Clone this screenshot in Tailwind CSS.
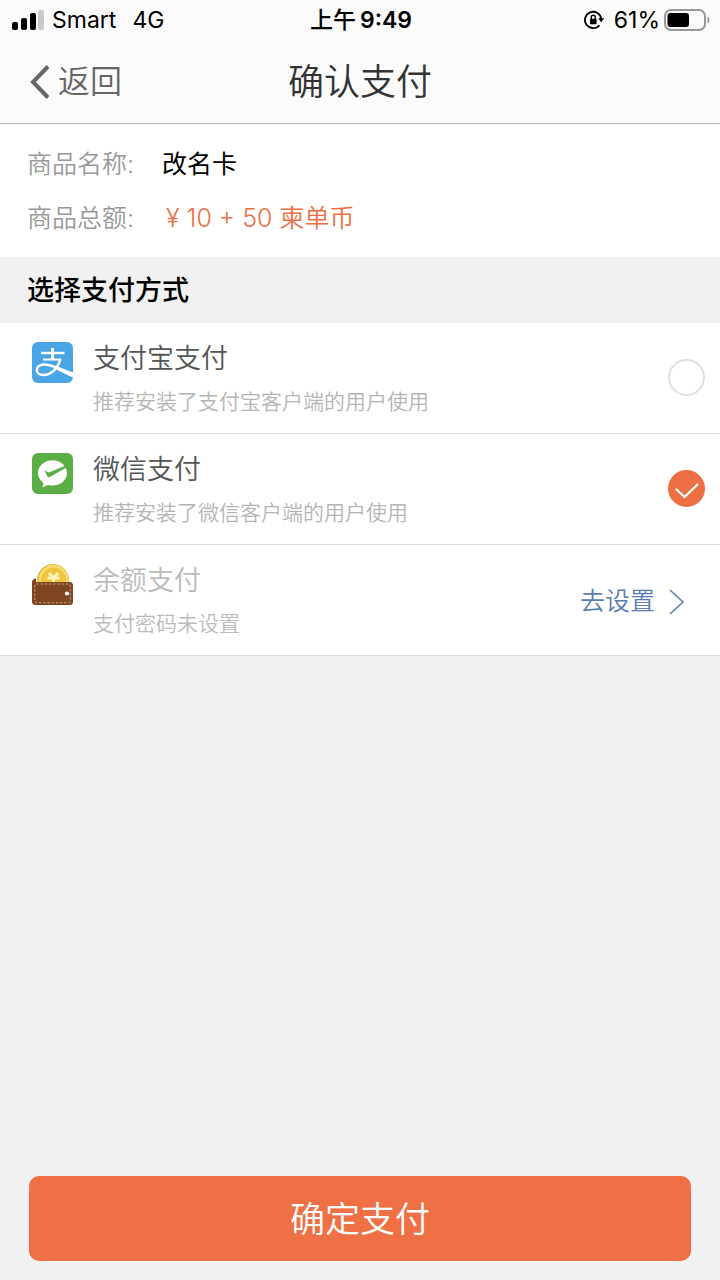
<!DOCTYPE html>
<html lang="zh-CN">
<head>
<meta charset="utf-8">
<meta name="viewport" content="width=device-width, initial-scale=1">
<title>确认支付</title>
<script src="https://cdn.jsdelivr.net/npm/@tailwindcss/browser@4"></script>
</head>
<body class="flex min-h-screen flex-col bg-[#f1f1f1] font-['Inter','Noto_Sans_CJK_SC',sans-serif] text-black">
  <header class="border-b border-[#b5b5b5] bg-[#fbfbfb]">
    <div class="grid h-10 grid-cols-[1fr_auto_1fr] items-center pr-[10px] pl-3 text-[23px] leading-10">
      <div class="flex items-center">
        <svg class="mr-2 h-5 w-8" viewBox="0 0 32 20" aria-hidden="true">
          <rect x="0" y="12" width="6" height="8" rx="2"/>
          <rect x="9" y="8" width="6" height="12" rx="2"/>
          <rect x="18" y="3" width="6" height="17" rx="2"/>
          <rect x="26" y="0" width="6" height="20" rx="2" fill="#c8c8c8"/>
        </svg>
        <span>Smart</span><span class="ml-4">4G</span>
      </div>
      <div class="flex items-center gap-1 font-medium"><span>上午</span><span class="font-semibold">9:49</span></div>
      <div class="flex items-center justify-end">
        <svg class="mr-[10px] h-5 w-5" viewBox="0 0 20 20" fill="none" stroke="#000" stroke-width="1.8" aria-hidden="true">
          <path d="M17.3 9A8.2 8.2 0 1 0 15.500 15.2"/>
          <path d="M14.2 8.2h6l-3 4z" fill="#000" stroke="none"/>
          <rect x="6" y="8.8" width="6.6" height="5.4" rx=".8" fill="#000" stroke="none"/>
          <path d="M7.3 9V7.2a2 2 0 0 1 4 0V9" stroke-width="1.4"/>
        </svg>
        <span>61%</span>
        <svg class="ml-1 h-[22px] w-[46px]" viewBox="0 0 46 22" fill="none" aria-hidden="true">
          <rect x="1" y="1" width="40" height="20" rx="6" stroke="#999" stroke-width="2"/>
          <rect x="3.5" y="4" width="21.5" height="14" rx="3" fill="#000"/>
          <path d="M43.5 7.5c2.5 1 2.5 6 0 7z" fill="#999"/>
        </svg>
      </div>
    </div>
    <div class="grid h-[83px] grid-cols-[1fr_auto_1fr] items-center px-[30px]">
      <button type="button" class="flex items-center gap-2 justify-self-start text-[32px] leading-10 font-[350] text-[#666]">
        <svg class="h-[34px] w-5" viewBox="0 0 20 34" fill="none" stroke="#666" stroke-width="4" aria-hidden="true"><path d="M18 1.5 3 17l15 15.500"/></svg>返回
      </button>
      <h1 class="text-[36px] leading-[48px] font-[350] text-[#333]">确认支付</h1>
    </div>
  </header>

  <main class="flex flex-1 flex-col font-[350]">
    <dl class="grid grid-cols-[auto_1fr] bg-white pt-[13px] pb-3 pl-[27px] text-[25px] leading-[54px]">
      <dt class="w-[135px] text-[#999]">商品名称:</dt><dd class="font-normal">改名卡</dd>
      <dt class="text-[#999]">商品总额:</dt><dd class="pl-1 text-[#ec7044]">¥ 10 + 50 柬单币</dd>
    </dl>
    <h2 class="pt-px pl-[27px] text-[27px] leading-[65px] font-medium">选择支付方式</h2>
    <div class="bg-white">
      <label class="flex items-center border-b border-[#ddd] pt-[14px] pr-[15px] pb-[10px] pl-8">
        <svg class="mt-[5px] mr-5 h-[41px] w-[41px] self-start" viewBox="0 0 41 41" aria-hidden="true">
          <rect width="41" height="41" rx="6" fill="#49a5e6"/>
          <g fill="none" stroke="#fff">
            <path d="M9 11h23.500" stroke-width="2.400"/>
            <path d="M20.500 6v12" stroke-width="3"/>
            <path d="M11 17.500h18" stroke-width="2"/>
            <path d="M28.500 17C26 26 19.500 33 11.500 33 3 33 2.500 24 11 22.500c7-1 15.500 4.500 30 9.200" stroke-width="2.500"/>
          </g>
          <path d="M26 26c5 2.200 9 3.500 15 5v4.500c-5-2.300-11-5-16.500-7.800z" fill="#fff"/>
        </svg>
        <span class="flex-1">
          <span class="block text-[27px] leading-[44px] text-[#555]">支付宝支付</span>
          <span class="block text-[21px] leading-[42px] text-[#b5b5b5]">推荐安装了支付宝客户端的用户使用</span>
        </span>
        <span class="mt-[22px] grid h-[37px] w-[37px] place-items-center self-start">
          <input type="radio" name="pay" class="peer col-start-1 row-start-1 h-[37px] w-[37px] appearance-none rounded-full border-2 border-[#e0e0e0] checked:border-[#ec7044] checked:bg-[#ec7044]">
          <svg class="pointer-events-none z-10 col-start-1 row-start-1 hidden h-[37px] w-[37px] peer-checked:block" viewBox="0 0 37 37" fill="none" stroke="#fff" stroke-width="2.200" stroke-linecap="round" aria-hidden="true"><path d="m8.500 19.500 8 7.500L29.500 14.500"/></svg>
        </span>
      </label>
      <label class="flex items-center border-b border-[#ddd] pt-[14px] pr-[15px] pb-[10px] pl-8">
        <svg class="mt-[5px] mr-5 h-[41px] w-[41px] self-start" viewBox="0 0 41 41" aria-hidden="true">
          <rect width="41" height="41" rx="6" fill="#5bad46"/>
          <path d="M20.500 7.200C12.300 7.200 6 12.900 6 20c0 4 2 7.500 5.300 9.800L10.500 34.500l5.300-2.600c1.500.5 3.100.7 4.700.7C28.700 32.600 35 27 35 20S28.700 7.200 20.500 7.200z" fill="#fff"/>
          <path d="m12.500 17.500 4.300 2L34.500 12.200v2.200L17.800 24c-1 .6-1.800.4-2.300-.6z" fill="#5bad46"/>
        </svg>
        <span class="flex-1">
          <span class="block text-[27px] leading-[44px] text-[#555]">微信支付</span>
          <span class="block text-[21px] leading-[42px] text-[#b5b5b5]">推荐安装了微信客户端的用户使用</span>
        </span>
        <span class="mt-[22px] grid h-[37px] w-[37px] place-items-center self-start">
          <input type="radio" name="pay" checked class="peer col-start-1 row-start-1 h-[37px] w-[37px] appearance-none rounded-full border-2 border-[#e0e0e0] checked:border-[#ec7044] checked:bg-[#ec7044]">
          <svg class="pointer-events-none z-10 col-start-1 row-start-1 hidden h-[37px] w-[37px] peer-checked:block" viewBox="0 0 37 37" fill="none" stroke="#fff" stroke-width="2.200" stroke-linecap="round" aria-hidden="true"><path d="m8.500 19.500 8 7.500L29.500 14.500"/></svg>
        </span>
      </label>
      <div class="flex items-center border-b border-[#ddd] pt-[14px] pr-[35px] pb-[10px] pl-8">
        <svg class="mt-[5px] mr-5 h-[41px] w-[41px] self-start" viewBox="0 0 41 41" aria-hidden="true">
          <circle cx="21" cy="16" r="16" fill="#e3b63c"/>
          <circle cx="21.500" cy="16" r="15" fill="#f6dc72"/>
          <circle cx="21.500" cy="16" r="12.500" fill="#eec43f"/>
          <path d="m17 9 4.500 5L26 9M15.500 14h12M21.500 14v6" fill="none" stroke="#fff3b8" stroke-width="3"/>
          <path d="M0 19c0-3 1.500-4.500 4-4.500V18h33.500a3.500 3.500 0 0 1 3.500 3.500v16a3.500 3.500 0 0 1-3.500 3.500h-34A3.500 3.500 0 0 1 0 37.500z" fill="#7f4420"/>
          <rect x="2.800" y="20" width="35.500" height="18.700" rx="1.500" fill="none" stroke="#c59a78" stroke-width="1" stroke-dasharray="2.500 1.700"/>
          <circle cx="35" cy="29.500" r="2.100" fill="#fff"/>
        </svg>
        <div class="flex-1">
          <div class="text-[27px] leading-[44px] text-[#bbb]">余额支付</div>
          <div class="text-[21px] leading-[42px] text-[#bbb]">支付密码未设置</div>
        </div>
        <a href="#" class="flex items-center gap-[14px] text-[25px] text-[#5a7eb0]">去设置
          <svg class="h-[26px] w-4" viewBox="0 0 16 26" fill="none" stroke="#5a7eb0" stroke-width="1.600" aria-hidden="true"><path d="m1 1 13 12-13 12"/></svg>
        </a>
      </div>
    </div>
    <div class="mt-auto px-[29px] pt-6 pb-[19px]">
      <button type="button" class="w-full rounded-[10px] bg-[#ee7044] pt-px text-[35px] leading-[84px] font-[350] text-white">确定支付</button>
    </div>
  </main>
</body>
</html>
